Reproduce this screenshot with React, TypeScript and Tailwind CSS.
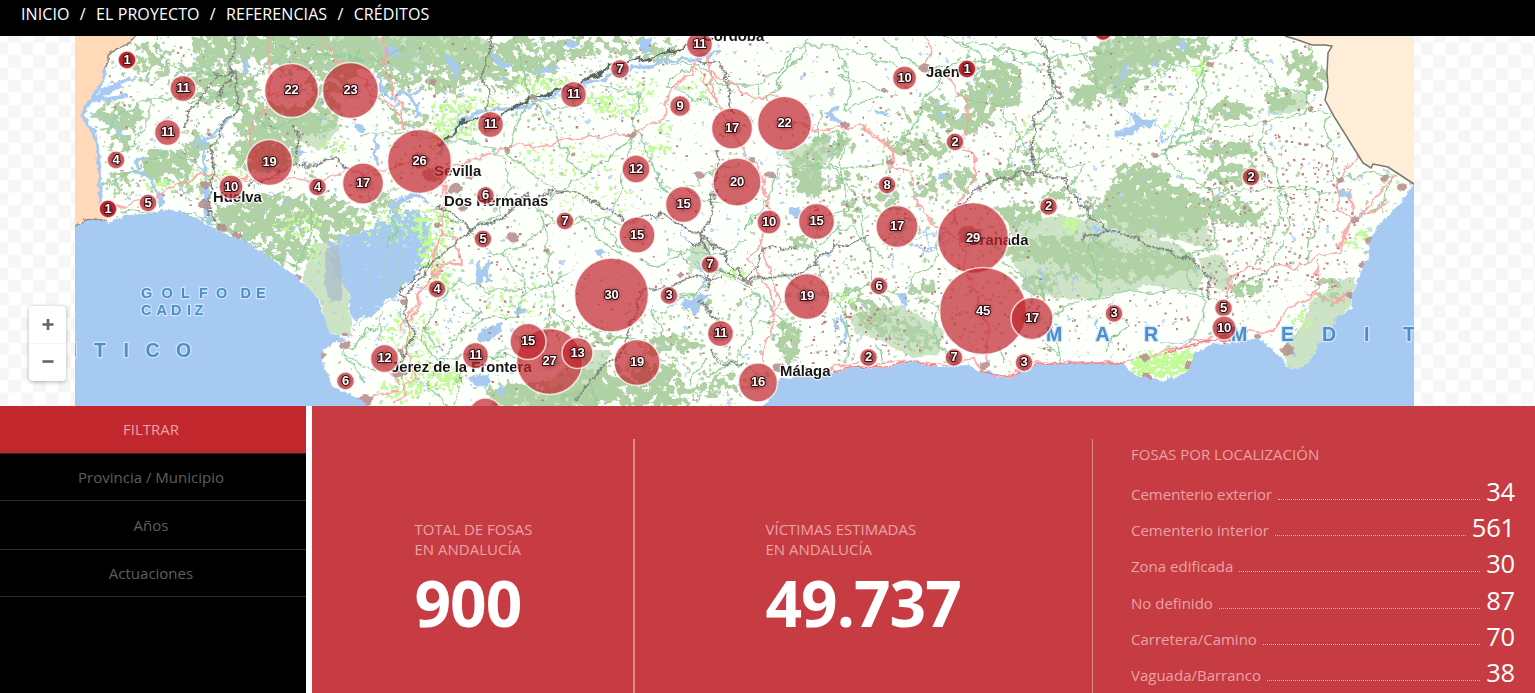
import React from "react";

type Marker = [number, number, number, string];
type Patch = [number, number, number, number, number];

const MARKERS: Marker[] = [
  [127, 60, 9, "1"], [183, 88.5, 13, "11"], [167.5, 132.5, 13, "11"], [116, 160, 9, "4"],
  [231, 187, 12, "10"], [148, 203, 9, "5"], [108, 209, 9, "1"], [291.5, 90.5, 27, "22"],
  [350.5, 90.5, 28, "23"], [269.5, 162.5, 23, "19"], [317.5, 187, 9, "4"], [363, 183.5, 20.5, "17"],
  [419.5, 161.5, 32, "26"], [490.5, 124.5, 13, "11"], [573.5, 94.5, 13, "11"], [620, 69, 9.5, "7"],
  [699.5, 44.5, 13, "11"], [680, 106, 10.5, "9"], [904.5, 78, 12, "10"], [967, 69, 9, "1"],
  [732, 128.5, 20.5, "17"], [784.5, 123.5, 27, "22"], [636, 169, 14, "12"], [737, 182, 24, "20"],
  [683.5, 204.5, 18, "15"], [565, 221, 9, "7"], [637, 235, 18, "15"], [769, 222, 12, "10"],
  [816.5, 221.5, 18, "15"], [887, 185, 9, "8"], [955, 142, 9, "2"], [1048.5, 206.5, 9, "2"],
  [1251, 177, 9, "2"], [897, 226.5, 21, "17"], [973, 238, 35.5, "29"], [983, 311, 43.5, "45"],
  [1032, 318.5, 21, "17"], [879, 286, 9, "6"], [807, 296.5, 23, "19"], [710, 264.5, 9, "7"],
  [669, 295.5, 9, "3"], [611.5, 295, 37, "30"], [720.5, 333.5, 13, "11"], [758, 382.5, 19.5, "16"],
  [868.5, 357.5, 9, "2"], [954, 357.5, 9, "7"], [1024, 362.5, 9, "3"], [1114, 313.5, 9, "3"],
  [1223.5, 308, 9, "5"], [1224, 328, 12, "10"], [485.5, 195.5, 9, "6"], [483, 239, 9, "5"],
  [437, 289, 9, "4"], [384.5, 358.5, 14, "12"], [345.5, 381, 9, "6"], [475.5, 355.5, 13, "11"],
  [549.5, 361.5, 33, "27"], [528, 341.5, 18, "15"], [577.5, 353, 15.5, "13"], [637, 362.5, 23, "19"],
  [485.5, 415, 17, ""], [1103, 31.5, 9, ""],
];

const SEA_WEST =
  "M60 230L75 226L85 221L98 219L110 222L118 219L128 215L145 214L165 210L180 211L200 220L212 227L222 233L247 242L267 255L290 272L303 283L317 297L323 313L330 333L338 337L346 339L333 343L320 355L327 372L333 387L357 397L367 406V440H60Z";
const SEA_EAST =
  "M762 440V406L768 400L775 390L780 378L800 377L833 373L857 367L887 368L910 362L937 367L967 365L980 372L990 370L997 378L1013 377L1037 365L1080 363L1123 363L1133 373L1140 377L1165 381L1178 377L1190 370L1195 353L1212 344L1232 343L1258 338L1272 350L1283 358L1287 370L1302 367L1315 355L1318 343L1328 333L1338 317L1352 307L1352 293L1362 273L1367 260L1370 243L1375 230L1388 215L1402 200L1414 184H1430V440Z";
const PORTUGAL =
  "M75 36H136L125 46L110 53L105 70L101 85L92 98L85 108L84 116L88 125L94 132L97 145L98 158L100 170L100 190L102 205L108 215L107 221L95 219L85 220L75 226Z";
const MURCIA =
  "M1285 36L1298 40L1312 45L1325 45L1332 46L1328 53L1327 73L1328 87L1325 100L1335 118L1355 150L1363 163L1371 168L1373 164L1388 167L1414 184V36Z";

const FOREST: Patch[] = [
  [240, 45, 50, 18, 0.95], [290, 50, 36, 22, 0.85], [335, 52, 60, 22, 1], [425, 48, 60, 18, 0.95],
  [150, 62, 24, 22, 0.6], [205, 80, 30, 24, 0.72], [235, 88, 26, 20, 0.8], [118, 115, 26, 12, 0.85],
  [125, 135, 18, 18, 0.65], [275, 125, 40, 22, 0.95], [265, 150, 34, 26, 0.9], [320, 115, 22, 22, 0.8],
  [155, 165, 14, 20, 0.95], [180, 165, 14, 16, 0.95], [200, 145, 18, 14, 0.75], [120, 185, 16, 16, 0.6],
  [230, 220, 20, 16, 0.8], [275, 215, 40, 22, 0.9], [320, 210, 34, 16, 0.85], [340, 225, 30, 18, 0.8],
  [250, 225, 26, 18, 0.8], [290, 250, 30, 14, 0.85], [240, 205, 20, 10, 0.7], [385, 205, 22, 12, 0.7],
  [400, 75, 26, 18, 0.7], [445, 75, 22, 24, 0.75], [470, 60, 28, 24, 0.8], [505, 70, 26, 22, 0.75],
  [520, 48, 24, 16, 0.75], [570, 48, 28, 14, 0.8], [620, 46, 26, 12, 0.65], [660, 52, 22, 12, 0.7],
  [545, 70, 18, 12, 0.7], [410, 120, 24, 14, 0.5], [330, 80, 24, 16, 0.7], [190, 190, 18, 10, 0.6],
  [1000, 80, 24, 22, 0.9], [990, 95, 30, 16, 0.95], [935, 105, 16, 10, 0.9], [955, 122, 24, 10, 0.9],
  [978, 118, 16, 14, 0.8], [925, 150, 28, 12, 0.8], [900, 145, 16, 10, 0.65], [905, 115, 16, 8, 0.6],
  [885, 200, 18, 14, 0.7], [930, 185, 20, 14, 0.65], [960, 180, 16, 14, 0.85], [1015, 175, 30, 10, 0.8],
  [1040, 150, 22, 8, 0.6], [1060, 60, 18, 8, 0.5], [1083, 97, 16, 11, 1], [1110, 62, 20, 24, 1],
  [1140, 55, 40, 20, 0.95], [1175, 50, 30, 14, 0.85], [1120, 85, 22, 20, 0.75], [1095, 80, 12, 12, 0.6],
  [1205, 50, 14, 12, 0.7], [1300, 60, 18, 10, 0.85], [1312, 78, 16, 14, 1], [1280, 100, 16, 12, 1],
  [1232, 110, 24, 10, 0.9], [1250, 45, 12, 8, 0.5], [1215, 150, 22, 10, 0.95], [1240, 148, 20, 8, 0.95],
  [1235, 175, 32, 12, 0.85], [1140, 190, 32, 28, 1], [1170, 205, 34, 20, 1], [1140, 205, 50, 16, 0.95],
  [1215, 210, 34, 14, 0.9], [1160, 225, 50, 12, 0.95], [1245, 215, 24, 12, 0.8], [1100, 215, 20, 12, 0.7],
  [1060, 250, 60, 14, 1], [1110, 270, 50, 12, 0.85], [1150, 262, 50, 14, 1], [1040, 285, 20, 14, 0.7],
  [1020, 215, 24, 14, 0.8], [1060, 195, 20, 10, 0.7], [1245, 290, 20, 9, 0.95], [1330, 290, 20, 18, 0.5],
  [830, 145, 24, 12, 0.8], [805, 165, 20, 14, 0.8], [810, 185, 18, 14, 0.9], [845, 180, 18, 10, 0.6],
  [800, 245, 18, 12, 0.55], [850, 210, 16, 12, 0.6], [870, 310, 24, 12, 0.7], [890, 325, 30, 12, 0.7],
  [920, 340, 20, 14, 0.65], [925, 290, 18, 10, 0.75], [850, 295, 16, 8, 0.6], [790, 345, 12, 18, 0.95],
  [785, 330, 14, 12, 0.6], [670, 345, 30, 12, 0.8], [660, 375, 24, 14, 0.8], [610, 385, 34, 16, 0.9],
  [525, 395, 40, 14, 1], [570, 398, 40, 12, 1], [640, 398, 40, 10, 1], [680, 395, 22, 10, 0.8],
  [600, 340, 20, 10, 0.65], [720, 385, 22, 12, 0.7], [560, 325, 24, 8, 0.5], [700, 305, 12, 8, 0.85],
  [590, 370, 14, 10, 0.7], [745, 300, 10, 8, 0.6], [1200, 120, 16, 10, 0.5], [1165, 85, 14, 8, 0.6],
];

const LIGHT_FOREST = [
  "M330 36H480L500 50L470 62L440 58L410 72L370 64L340 70Z",
  "M300 115L330 110L340 128L320 150L296 140Z",
  "M310 245L345 240L352 335L338 337L328 330L320 300L303 283Z",
  "M1095 85L1100 40L1180 36L1160 62L1130 70L1118 92Z",
  "M1270 100L1310 90L1305 110L1268 116Z",
  "M1010 225L1060 215L1110 225L1180 245L1205 275L1196 292L1150 285L1090 300L1060 298L1030 290L1012 260Z",
  "M1100 215L1120 190L1200 210L1215 250L1180 240L1130 232Z",
  "M1198 258L1222 255L1234 284L1222 292L1205 278Z",
  "M1312 300L1350 278L1352 305L1338 317L1328 333L1318 343L1315 355L1302 367L1287 370L1285 340L1300 330Z",
  "M850 315L900 305L945 330L938 355L912 358L880 340L855 332Z",
  "M500 385L540 392L580 350L610 350L590 406H495Z",
  "M780 150L825 140L835 155L812 175L790 165Z",
  "M690 245L712 240L708 262L688 275Z",
  "M1330 282L1355 276L1356 290L1332 296Z",
];

const BRIGHT: Patch[] = [
  [470, 105, 40, 8, 0.6], [455, 125, 26, 16, 0.6], [550, 85, 40, 10, 0.6], [600, 100, 16, 8, 0.72],
  [620, 110, 30, 10, 0.62], [640, 90, 20, 12, 0.5], [655, 150, 18, 5, 0.95], [440, 140, 10, 12, 0.75],
  [435, 230, 20, 24, 0.62], [430, 255, 14, 18, 0.68], [440, 280, 16, 12, 0.66], [300, 225, 24, 14, 0.5],
  [335, 145, 14, 8, 0.65], [230, 175, 20, 10, 0.55], [160, 185, 16, 8, 0.7], [410, 340, 30, 30, 0.48],
  [435, 380, 30, 16, 0.58], [400, 390, 24, 12, 0.62], [450, 375, 14, 12, 0.62], [735, 275, 18, 6, 0.8],
  [845, 298, 14, 5, 0.9], [1030, 130, 22, 12, 0.42], [1070, 225, 9, 9, 1], [1200, 70, 12, 10, 0.75],
  [1160, 365, 32, 14, 1], [1180, 357, 26, 8, 1], [1365, 235, 10, 8, 0.9], [1300, 320, 12, 12, 0.6],
  [1350, 245, 10, 4, 0.9], [1390, 180, 10, 6, 0.7], [1170, 125, 14, 6, 0.55], [560, 160, 60, 20, 0.32],
  [600, 200, 40, 20, 0.32], [520, 300, 40, 20, 0.34], [440, 52, 12, 8, 0.4], [390, 225, 40, 20, 0.42],
  [665, 130, 8, 8, 0.7], [700, 90, 20, 14, 0.45], [315, 255, 8, 8, 0.7], [200, 180, 14, 8, 0.5],
];

const LAKES = [
  "M242 58L248 60L247 74L242 72L244 66ZM388 44L398 48L400 56L392 58L384 52ZM446 52L452 60L458 64L459 78L455 77L450 66L445 60Z",
  "M492 52L500 60L510 63L508 68L498 66L492 60ZM533 72L545 68L558 65L560 69L548 72L536 74ZM640 40L652 38L650 48L644 54L640 50ZM563 42L572 40L580 42L574 48L566 46Z",
  "M354 122L362 124L366 130L360 133L356 128ZM476 340L482 330L495 325L503 322L500 332L490 340L482 343ZM466 378L476 375L488 374L492 382L484 388L474 384ZM496 390L502 384L504 392L500 397Z",
  "M477 270L484 266L488 261L491 264L487 270L490 278L494 282L488 282L484 276L480 285L477 284ZM594 251L600 249L606 252L602 255L596 254Z",
  "M681 304L686 298L694 300L698 294L708 296L704 301L698 304L700 311L694 316L690 308L684 309Z",
  "M825 113L830 108L840 106L838 111L832 112L836 118L844 122L846 128L838 124L830 119ZM790 209L798 206L802 212L796 218L790 214Z",
  "M898 294L905 294L908 302L906 308L900 302ZM832 318L838 322L840 330L834 328ZM1114 131L1128 128L1136 124L1130 114L1134 113L1142 121L1150 119L1158 120L1152 126L1140 128L1132 135L1116 137Z",
  "M1178 42L1184 41L1187 50L1182 52ZM1123 62L1127 64L1126 76L1121 77ZM1150 66L1154 58L1156 64L1152 68ZM1337 192L1342 190L1348 193L1354 197L1350 199L1340 196Z",
  "M937 174L942 174L949 173L946 178L940 180L937 177ZM936 113L944 114L948 117L940 117ZM874 110L882 111L890 116L884 116L876 113ZM1095 316L1098 320L1098 328L1094 326ZM514 312L524 307L526 310L516 316Z",
  "M134 160L140 156L142 160L138 163L142 172L138 170ZM203 184L208 182L210 202L211 222L206 214L203 200ZM158 192L163 194L165 208L159 208ZM294 154L300 150L306 153L300 157Z",
];

const RIVERS = [
  "M190 145L205 138L225 125L235 115M205 140L207 170L205 190L208 215L212 226M135 165L150 182L158 200",
  "M440 155L450 135L465 118L490 110L520 108L545 98L575 88L600 78L640 66L680 60L720 52",
  "M375 75L385 90L395 98M405 95L418 105L418 120M376 135L378 165M393 98L402 94L412 97L420 90",
  "M388 215L400 200L415 195L430 205M350 310L358 290L352 270L340 250",
  "M840 345L848 330L840 315M478 275L478 262",
];

const STREAMS = [
  "M1120 100L1115 85L1125 70M1120 100L1132 118L1118 130M1155 120L1165 140L1180 130M1025 270L1030 300M1040 268L1045 290M1055 272L1060 295M1075 275L1072 290",
  "M695 260L705 275L700 295L688 300M680 230L695 250M890 235L930 250L950 236M430 220L424 240L410 250M360 325L372 310L400 300M915 240L945 232M918 248L950 242M925 228L930 250M938 226L942 248",
  "M375 340L390 320M890 250L895 270M1090 230L1110 228L1118 240M1160 345L1200 340M1350 180L1365 175M88 112L112 122L122 140M420 240L380 260L370 290M1085 226L1115 232M1095 222L1098 238",
];

const MARSH_GRID =
  "M372 270L410 250M376 280L414 262M380 290L412 276M384 262L392 296M394 258L402 288M404 254L410 280M366 262L372 300M350 262L358 300M360 246L340 262M382 220L396 242L384 258M398 215L420 240M410 222L424 228";

const GREEN_ROADS = [
  "M155 36L160 55L185 75L205 72L240 85L265 70L295 45M185 75L175 95M147 98L205 100L240 90M147 98L147 125L128 150L118 155M147 98L100 130M240 90L232 105L250 115L275 130L310 115L330 120",
  "M110 185L135 170L170 150L195 165L215 178M275 130L255 110M270 36L295 60L330 55L380 60L405 45M345 70L360 50M305 170L320 195M310 205L312 240L296 270M300 270L250 240L195 215L120 210",
  "M380 60L395 80L380 100L400 115M360 135L410 132L440 140L470 142L495 150L505 160L510 190L500 215L470 230",
  "M515 36L525 80L530 98L550 125L570 160L585 175L560 190L540 210L555 220L590 222L640 222M530 98L515 125L510 155",
  "M530 98L560 110L575 108M508 155L540 180L560 195M585 175L610 155L630 140L635 130L640 95L600 85M635 130L650 155L662 190L685 205",
  "M635 130L625 165L620 200L605 225L620 250M440 215L470 230L500 255L520 275L525 290L518 320L495 318L460 330M500 255L530 240L545 225L535 205",
  "M545 225L550 275L553 300L545 330L550 345M545 225L580 215L600 240L620 255M518 290L485 290L460 280L440 300L425 330L440 350",
  "M518 290L550 285L575 270M460 300L480 310L440 360L470 355L520 358L545 352M550 310L570 325L590 330M640 260L660 268L685 250L720 255L745 240",
  "M660 312L700 290L720 270L745 285L760 300L750 335L735 360L710 375M700 290L670 300M720 270L690 265L670 245M745 285L780 275L800 290L830 295",
  "M665 65L700 62L720 85L755 85L780 70L795 45M700 62L665 85L720 108L755 120M763 95L760 85M775 90L785 70L800 60L808 40",
  "M795 45L835 45L870 55L905 70M795 45L780 85L765 100M835 45L850 85L845 110L880 95M850 85L840 75L885 90M820 110L815 140L845 130L830 165L860 200",
  "M880 36L900 55L925 70L950 65L985 60L1010 52L1030 55L1080 55L1115 52M950 65L925 100L915 125L890 150L890 160M1010 52L960 40L985 60",
  "M965 100L1000 105L1020 135L1012 155L995 180L1040 165L1035 145M1020 135L1050 118L1055 75L1010 55M1020 135L1035 165M1065 165L1055 145L1040 160M1062 165L1085 165L1070 185",
  "M945 36L970 50L965 60M1050 36L1080 45L1095 85L1110 95L1130 85L1160 70L1190 65L1210 60L1230 50L1235 36M1205 65L1195 95L1180 125L1165 155L1180 175L1220 192L1250 190L1280 188L1335 192",
  "M1160 150L1195 140L1197 130L1205 70M1195 127L1260 124L1305 112L1310 92L1280 92L1265 70L1240 36M1310 110L1335 115L1320 125L1332 150L1335 180M1265 125L1258 145L1275 165L1282 190L1275 230L1255 265M1197 130L1160 155L1155 158",
  "M1340 180L1370 172L1390 180L1385 200L1362 218M1320 190L1315 225L1305 265M1285 192L1290 225L1270 268L1240 290L1225 300M1213 195L1215 250L1185 255L1190 285L1205 290L1205 310L1190 345",
  "M1085 200L1090 235L1100 300L1060 305L1050 330L1062 355M1090 300L1130 290L1180 290L1220 300M1090 235L1105 250M1115 310L1130 325L1110 340L1105 355M1005 260L1020 275L1040 280L1045 300",
  "M860 210L870 250L875 290L895 305M940 235L935 265L915 275L905 290M820 215L815 260L830 300L845 310L850 340L845 365M830 300L870 285L900 295M885 260L850 225L820 245",
  "M775 165L850 168L890 162M845 130L840 170L850 205L835 215M780 165L765 205L745 230M700 175L740 165M685 180L690 195L720 205M655 190L700 185L705 175",
  "M925 300L940 305L935 340L955 360M955 360L930 340M880 345L885 365M1000 345L1005 365M1035 345L1060 355L1060 365M780 345L785 320L760 295M800 320L760 325M715 355L740 365L760 375",
  "M430 320L420 340L440 365L425 385L450 406M380 320L355 345L340 355M345 355L365 380M345 355L375 370M380 310L380 340M400 310L410 330",
  "M460 365L455 406M470 360L520 350M600 330L635 340M650 310L665 330L650 345M705 360L690 380L700 400M560 400L590 385L600 406M388 246L398 228L392 218",
];

const RED_ROADS = [
  "M268 36L270 60L268 95L290 90M268 105L255 120L248 145L255 165L243 180L280 178L317 182L345 172L390 170L410 160M320 36L340 60L375 95L392 105L405 125M382 36L385 55L388 75L398 100L405 130",
  "M105 210L150 200L200 172L210 175L225 185L245 175M415 155L440 175L470 160L508 148L540 145L580 137L632 135L665 115L670 90L690 75L698 55M632 135L640 130",
  "M440 170L445 200L440 240L432 275L460 260L455 240L440 230M432 275L415 310L405 350L415 375L395 406M432 275L400 330M440 200L443 170M400 385L385 365M398 388L370 400",
  "M710 55L710 80L720 110L735 130L748 160L765 175L770 210L765 240L748 258L770 290L775 320L765 345L765 370M693 60L712 95L725 110M790 120L815 130L840 128L860 125L880 135L895 165L912 175L915 200L930 220L960 240L970 280L990 330L985 365",
  "M710 70L740 90L755 98L790 95M928 36L930 55L925 65M945 75L965 100L968 120L960 150L975 155L975 175L960 200L950 225M860 125L870 133L885 140L892 165",
  "M780 378L810 374L850 366L860 365L900 361L950 366L975 358L985 375L1010 375L1030 362L1075 362L1125 362L1165 352L1200 340L1232 335L1275 330L1285 310L1315 295L1335 302L1350 295M1225 300L1225 290L1240 272L1265 268L1305 265L1320 255L1340 250L1350 225L1352 190M1315 265L1320 285L1310 298",
  "M1360 155L1345 170L1335 185L1340 210L1355 222L1370 205L1395 175M1350 222L1340 245M1355 222L1390 200M775 285L762 240M770 320L780 300L775 285",
];

const RAILS = [
  "M235 36L235 50L230 75L220 95M215 75L200 100L188 110L185 128M212 73L235 75L238 110L222 125L212 155L215 170L208 195L212 215L222 228M295 125L298 140L295 155M250 185L275 175L295 165L320 165L335 158L350 172",
  "M491 36L483 75L490 98L489 118M700 58L725 65L728 90L732 115M720 150L715 175L710 225L700 235L712 260L705 290M540 195L565 192L595 200L625 220L660 215L690 230L715 245L748 280L800 275L830 250L870 235",
  "M710 270L745 278L760 260L765 250L800 248M670 290L640 290L633 320L620 355L600 370L575 400M665 290L690 278L720 280M700 300L725 330M712 350L715 360L740 366M430 260L400 290L415 335L400 360",
  "M528 195L500 220L470 230L430 265L405 295M440 205L470 230M1035 36L1050 55L1050 75L1060 95L1035 115L1030 150L1035 172L990 180L960 205M1035 172L1060 178L1090 215L1110 230L1170 252L1195 260L1210 280L1210 300M1080 240L1110 230M690 245L710 240L715 250",
];

const TOWNS: [number, number, number][] = [
  [205, 205, 7], [205, 185, 5], [432, 175, 9], [455, 188, 7], [470, 175, 5], [438, 225, 4], [508, 150, 4],
  [463, 207, 5], [513, 237, 6], [420, 160, 9], [405, 302, 4], [345, 345, 6], [365, 400, 8], [322, 355, 4],
  [400, 372, 8], [925, 68, 6], [1210, 64, 4], [1155, 155, 4], [700, 175, 5], [632, 135, 4], [573, 155, 3],
  [533, 97, 3], [547, 250, 3], [680, 275, 3], [748, 282, 4], [770, 175, 5], [778, 368, 6], [970, 235, 12],
  [895, 225, 4], [985, 365, 5], [1145, 357, 5], [1190, 365, 6], [1225, 338, 5], [1257, 336, 4], [1287, 350, 7],
  [1340, 180, 4], [1355, 220, 4], [1370, 240, 5], [1362, 265, 4], [1402, 187, 5], [1385, 178, 4], [1147, 377, 6],
  [298, 278, 4], [237, 236, 5], [222, 228, 5], [845, 125, 4], [885, 90, 3], [433, 82, 4], [890, 162, 3],
  [433, 290, 4], [402, 350, 3], [1310, 108, 3], [1265, 122, 3], [345, 335, 3], [752, 160, 4], [1350, 295, 4],
];

function seeded(seed: number) {
  let s = seed;
  return () => {
    s = (s * 1664525 + 1013904223) % 4294967296;
    return s / 4294967296;
  };
}

type Area = [number, number, number, number, number];

function scatter(seed: number, areas: Area[]) {
  const rnd = seeded(seed);
  const out: string[] = [];
  for (const [x0, y0, w, h, n] of areas) {
    for (let i = 0; i < n; i++) {
      const x = x0 + rnd() * w;
      const y = y0 + rnd() * h;
      const a = (1 + rnd() * 1.7).toFixed(1);
      const b = (1 + rnd() * 1.5).toFixed(1);
      out.push(`M${x.toFixed(1)} ${y.toFixed(1)}h${a}v${b}h-${a}z`);
    }
  }
  return out.join("");
}

const SPECKS = scatter(41, [
  [105, 40, 335, 165, 120], [430, 40, 480, 330, 330], [900, 40, 420, 170, 190], [800, 130, 250, 225, 150],
  [1195, 180, 165, 110, 210], [1260, 130, 80, 70, 60], [810, 305, 80, 50, 50], [1020, 290, 230, 60, 70],
  [420, 230, 150, 170, 50],
]);
const PONDS = scatter(97, [
  [105, 40, 330, 165, 150], [350, 180, 110, 210, 110], [430, 40, 250, 100, 60], [450, 200, 350, 180, 40],
  [780, 60, 260, 240, 40], [1030, 40, 280, 120, 20],
]);
const GROVES = scatter(63, [
  [105, 40, 370, 190, 330], [430, 40, 200, 90, 120], [780, 120, 280, 220, 380], [1040, 60, 270, 220, 260],
  [560, 310, 190, 90, 200], [430, 250, 130, 90, 60],
]);

const LABELS: [number, number, string][] = [
  [213, 202, "Huelva"], [434, 176, "Sevilla"], [444, 206, "Dos Hermanas"], [703, 41, "Córdoba"],
  [926, 77, "Jaén"], [968, 245, "Granada"], [780, 376, "Málaga"], [391, 372, "Jerez de la Frontera"],
];

function Patches({ items }: { items: Patch[] }) {
  return (
    <>
      {items.map(([cx, cy, rx, ry, o], i) => (
        <ellipse key={i} cx={cx} cy={cy} rx={rx} ry={ry} opacity={o} />
      ))}
    </>
  );
}

type NoiseProps = { id: string; freq: number; seed: number; color: string; blur: number; shape: number; grain: number; bias: number };

function NoiseFilter({ id, freq, seed, color, blur, shape, grain, bias }: NoiseProps) {
  return (
    <filter id={id} filterUnits="userSpaceOnUse" x="75" y="36" width="1340" height="370" colorInterpolationFilters="sRGB">
      <feGaussianBlur in="SourceAlpha" stdDeviation={blur} result="soft" />
      <feTurbulence type="fractalNoise" baseFrequency={freq} numOctaves={4} seed={seed} />
      <feColorMatrix values="0 0 0 0 0  0 0 0 0 0  0 0 0 0 0  1.8 0 0 0 -0.4" result="noise" />
      <feComposite in="soft" in2="noise" operator="arithmetic" k1={0} k2={shape} k3={grain} k4={bias} />
      <feComponentTransfer result="mask">
        <feFuncA type="linear" slope={12} intercept={0} />
      </feComponentTransfer>
      <feFlood floodColor={color} />
      <feComposite in2="mask" operator="in" />
    </filter>
  );
}

function MapCanvas() {
  return (
    <svg className="block h-[370px] w-[1535px]" viewBox="0 36 1535 370">
      <defs>
        <pattern id="checker" x="20.8" y="42.6" width="25" height="25" patternUnits="userSpaceOnUse">
          <rect width="25" height="25" fill="#fff" />
          <rect width="12.5" height="12.5" fill="#f6f6f6" />
          <rect x="12.5" y="12.5" width="12.5" height="12.5" fill="#f6f6f6" />
        </pattern>
        <clipPath id="sheet"><rect x="75" y="36" width="1339" height="370" /></clipPath>
        <NoiseFilter id="forest" freq={0.14} seed={7} color="#b0d1a3" blur={4} shape={0.8} grain={1} bias={-0.93} />
        <NoiseFilter id="fields" freq={0.22} seed={12} color="#c3fb98" blur={3} shape={0.8} grain={1} bias={-1} />
        <NoiseFilter id="marsh" freq={0.12} seed={31} color="#a7caf3" blur={4} shape={0.8} grain={0.8} bias={-0.74} />
        <filter id="wobble" filterUnits="userSpaceOnUse" x="75" y="30" width="1340" height="380">
          <feTurbulence type="fractalNoise" baseFrequency="0.07" numOctaves={3} seed={4} />
          <feDisplacementMap in="SourceGraphic" scale={13} xChannelSelector="R" yChannelSelector="G" />
        </filter>
        <filter id="rough" filterUnits="userSpaceOnUse" x="60" y="26" width="1370" height="400">
          <feTurbulence type="fractalNoise" baseFrequency="0.15" numOctaves={3} seed={9} />
          <feDisplacementMap in="SourceGraphic" scale={6} xChannelSelector="R" yChannelSelector="G" />
        </filter>
        <filter id="halo" x="-60%" y="-60%" width="220%" height="220%">
          <feGaussianBlur stdDeviation="2" />
        </filter>
      </defs>
      <rect y="36" width="1535" height="370" fill="url(#checker)" />
      <g clipPath="url(#sheet)">
        <rect x="75" y="36" width="1339" height="370" fill="#fcfffa" />
        <g fill="#cde3c6" filter="url(#rough)">
          {LIGHT_FOREST.map((d) => <path key={d} d={d} />)}
        </g>
        <path d={GROVES} fill="#b9d6ae" stroke="#b9d6ae" strokeWidth="0.8" />
        <g filter="url(#forest)"><Patches items={FOREST} /></g>
        <g filter="url(#marsh)">
          <path d="M330 245L370 228L400 212L425 215L432 235L425 262L405 285L390 300L372 312L360 325L352 320L350 290L335 270Z" />
        </g>
        <path d={MARSH_GRID} fill="none" stroke="#a9d3c8" strokeWidth="1.2" filter="url(#wobble)" />
        <path d="M326 248L338 246L342 275L343 300L333 302L324 285Z" fill="#aebfc8" opacity="0.8" filter="url(#rough)" />
        <g filter="url(#fields)"><Patches items={BRIGHT} /></g>
        <path d={PONDS} fill="#a7caf3" />
        <g fill="#a7caf3" filter="url(#rough)">
          {LAKES.map((d) => <path key={d} d={d} />)}
        </g>
        <g fill="none" stroke="#a7caf3" strokeWidth="3" filter="url(#wobble)">
          {RIVERS.map((d) => <path key={d} d={d} />)}
          <g strokeWidth="1.2">
            {STREAMS.map((d) => <path key={d} d={d} />)}
          </g>
        </g>
        <g fill="none" stroke="#90cc98" strokeWidth="1.25" filter="url(#wobble)">
          {GREEN_ROADS.map((d) => <path key={d} d={d} />)}
        </g>
        <g fill="none" stroke="#ff9f9f" strokeWidth="1.7" opacity="0.9" filter="url(#wobble)">
          {RED_ROADS.map((d) => <path key={d} d={d} />)}
        </g>
        <g fill="none" filter="url(#wobble)">
          {RAILS.map((d) => (
            <g key={d}>
              <path d={d} stroke="#858585" strokeWidth="1.1" />
              <path d={d} stroke="#707070" strokeWidth="3" strokeDasharray="1.2 2.6" opacity="0.8" />
            </g>
          ))}
          <path d="M440 145L465 120L500 118L530 98L580 85L610 65L640 60L690 45" stroke="#58625e" strokeWidth="2.2" />
        </g>
        <path d={SPECKS} fill="#bd7f83" />
        <g fill="#b9928f" opacity="0.9" filter="url(#rough)">
          {TOWNS.map(([x, y, r], i) => <ellipse key={i} cx={x} cy={y} rx={r} ry={r * 0.75} />)}
        </g>
        <g fill="#a7caf3" filter="url(#rough)">
          <path d={SEA_WEST} />
          <path d={SEA_EAST} />
        </g>
        <path d="M75 300H280V406H75ZM1380 260H1414V406H1380ZM280 398H352V406H280ZM772 398H1414V406H772Z" fill="#a7caf3" />
        <path d="M1232 338L1200 343L1165 353M1123 363L1080 363L1037 364L1013 376L997 376L980 370M937 366L910 361L887 367L857 366L833 372" fill="none" stroke="#ef7f86" strokeWidth="1.6" filter="url(#rough)" />
        <path d={PORTUGAL} fill="#ffd9b8" />
        <path d={MURCIA} fill="#ffeed7" />
        <path d="M136 36L125 46L110 53L105 70M75 226L85 220L95 219L107 221" fill="none" stroke="#8d8d86" strokeWidth="1.6" filter="url(#rough)" />
        <path d="M105 70L101 85L92 98L85 108L84 116L88 125L94 132L97 145L98 158L100 170L100 190L102 205L108 215" fill="none" stroke="#a7caf3" strokeWidth="3.5" filter="url(#rough)" />
        <path d="M88 102L108 92L122 86M92 98L100 100L128 95M100 92L118 84L132 78" fill="none" stroke="#a7caf3" strokeWidth="4.5" filter="url(#rough)" />
        <path d="M1285 36L1298 40L1312 45L1325 45L1332 46L1328 53L1327 73L1328 87L1325 100L1335 118L1355 150L1363 163L1371 168L1373 164L1388 167L1414 184" fill="none" stroke="#77756f" strokeWidth="1.5" />
        <g fontFamily="'Liberation Sans', Arial, sans-serif" fontWeight="700" paintOrder="stroke" strokeLinejoin="round">
          <g fill="#4a8fca" stroke="#d3e5f9" strokeWidth="2.4">
            <text x="141 161.500 181 199 216 240.500 256" y="297.500" fontSize="14.5">GOLFODE</text>
            <text x="141 156.500 171 187 194.500" y="315" fontSize="14.5">CADIZ</text>
            <text x="71.500 94 123.500 145.500 176" y="356.500" fontSize="19.5">ITICO</text>
            <text x="1046 1095.500 1144 1231 1281 1322 1364 1403" y="341" fontSize="19.500">MARMEDIT</text>
          </g>
          <g fill="#161616" stroke="#fff" strokeWidth="2.4" strokeOpacity="0.8" fontSize="14.9">
            {LABELS.map(([x, y, t]) => <text key={t} x={x} y={y}>{t}</text>)}
          </g>
        </g>
      </g>
      {MARKERS.map(([x, y, r, n], i) => (
        <circle key={i} cx={x} cy={y} r={r} fill="#c2242c" fillOpacity={n === "1" || y < 36 ? 0.97 : 0.7} stroke="#fff" strokeWidth="1.6" strokeOpacity="0.72" />
      ))}
      <g fontFamily="'Liberation Sans', Arial, sans-serif" fontWeight="700" fontSize="13" textAnchor="middle" strokeLinejoin="round">
        {MARKERS.filter((m) => m[3]).map(([x, y, , n], i) => (
          <g key={i}>
            <ellipse cx={x} cy={y} rx={n.length > 1 ? 7.5 : 4.5} ry="5" fill="#2a0508" opacity="0.5" filter="url(#halo)" />
            <text x={x} y={y + 3.6} fill="#fff" stroke="#33090c" strokeWidth="2" paintOrder="stroke" letterSpacing="-0.3">{n}</text>
          </g>
        ))}
      </g>
    </svg>
  );
}

const NAV = ["INICIO", "EL PROYECTO", "REFERENCIAS", "CRÉDITOS"];
const PLACES: [string, string][] = [
  ["Cementerio exterior", "34"], ["Cementerio interior", "561"], ["Zona edificada", "30"],
  ["No definido", "87"], ["Carretera/Camino", "70"], ["Vaguada/Barranco", "38"],
];

function Stat({ top, value }: { top: string; value: string }) {
  return (
    <div className="pt-[80px]">
      <div className="text-[15px] leading-5 text-[#e9a3a6]">{top}<br />EN ANDALUCÍA</div>
      <div className="mt-[4px] text-[64px] leading-[80px] font-bold tracking-[-1px] text-white">{value}</div>
    </div>
  );
}

export default function App() {
  return (
    <div className="flex h-[693px] w-[1535px] flex-col overflow-hidden bg-white font-['Open_Sans',sans-serif]">
      <nav className="flex h-9 shrink-0 items-start bg-black pt-[3px] pl-[21px] text-[16px] leading-[22px] tracking-[0.1px] text-white">
        {NAV.map((item, i) => (
          <React.Fragment key={item}>
            {i > 0 && <span className="w-[26.400px] text-center">/</span>}
            <a>{item}</a>
          </React.Fragment>
        ))}
      </nav>
      <main className="relative h-[370px] shrink-0">
        <MapCanvas />
        <div className="absolute top-[270px] left-[29px] flex h-[75px] w-[37px] flex-col rounded-[4px] bg-white shadow-[0_1px_4px_rgba(0,0,0,0.3)]">
          <button aria-label="+" className="flex h-[38px] items-center justify-center border-b border-[#f3f3f3]">
            <svg className="h-3 w-3" viewBox="0 0 12 12"><path d="M6 0V11M0.500 5.500H11.500" stroke="#666" strokeWidth="2.600" /></svg>
          </button>
          <button aria-label="−" className="flex h-[36px] items-center justify-center">
            <svg className="h-3 w-3" viewBox="0 0 12 12"><path d="M0.500 5.500H11.500" stroke="#666" strokeWidth="2.600" /></svg>
          </button>
        </div>
      </main>
      <section className="flex h-[287px] shrink-0">
        <aside className="w-[306px] shrink-0 bg-black text-center text-[15px] text-[#5e5e5e]">
          <div className="h-[48px] border-b border-[#2b2b2b] bg-[#c1272d] pr-1 leading-[47px] text-[#e8a3a6]">FILTRAR</div>
          <div className="h-[47px] border-b border-[#2b2b2b] pr-1 leading-[47px]">Provincia / Municipio</div>
          <div className="h-[49px] border-b border-[#2b2b2b] pr-1 leading-[49px]">Años</div>
          <div className="h-[47px] border-b border-[#2b2b2b] pr-1 leading-[47px]">Actuaciones</div>
        </aside>
        <div className="ml-[6px] flex flex-1 bg-[#c73b42] pt-[33px]">
          <div className="w-[323px] border-r-2 border-[#dd898d] pl-[102.500px]"><Stat top="TOTAL DE FOSAS" value="900" /></div>
          <div className="w-[458px] border-r border-[#dd898d] pl-[130.500px]"><Stat top="VÍCTIMAS ESTIMADAS" value="49.737" /></div>
          <div className="flex-1 pt-[5px] pr-5 pl-[38px]">
            <h2 className="text-[15px] leading-5 text-[#e9a3a6]">FOSAS POR LOCALIZACIÓN</h2>
            <ul className="mt-[8px]">
              {PLACES.map(([name, n]) => (
                <li key={name} className="flex h-[36.200px] items-baseline">
                  <span className="text-[15px] text-[#e9a3a6]">{name}</span>
                  <span className="mr-[6px] ml-[6px] h-px flex-1 border-b border-dotted border-[#eeb9bb]" />
                  <span className="translate-y-px text-[25.500px] leading-[36px] tracking-[-0.2px] text-white">{n}</span>
                </li>
              ))}
            </ul>
          </div>
        </div>
      </section>
    </div>
  );
}
